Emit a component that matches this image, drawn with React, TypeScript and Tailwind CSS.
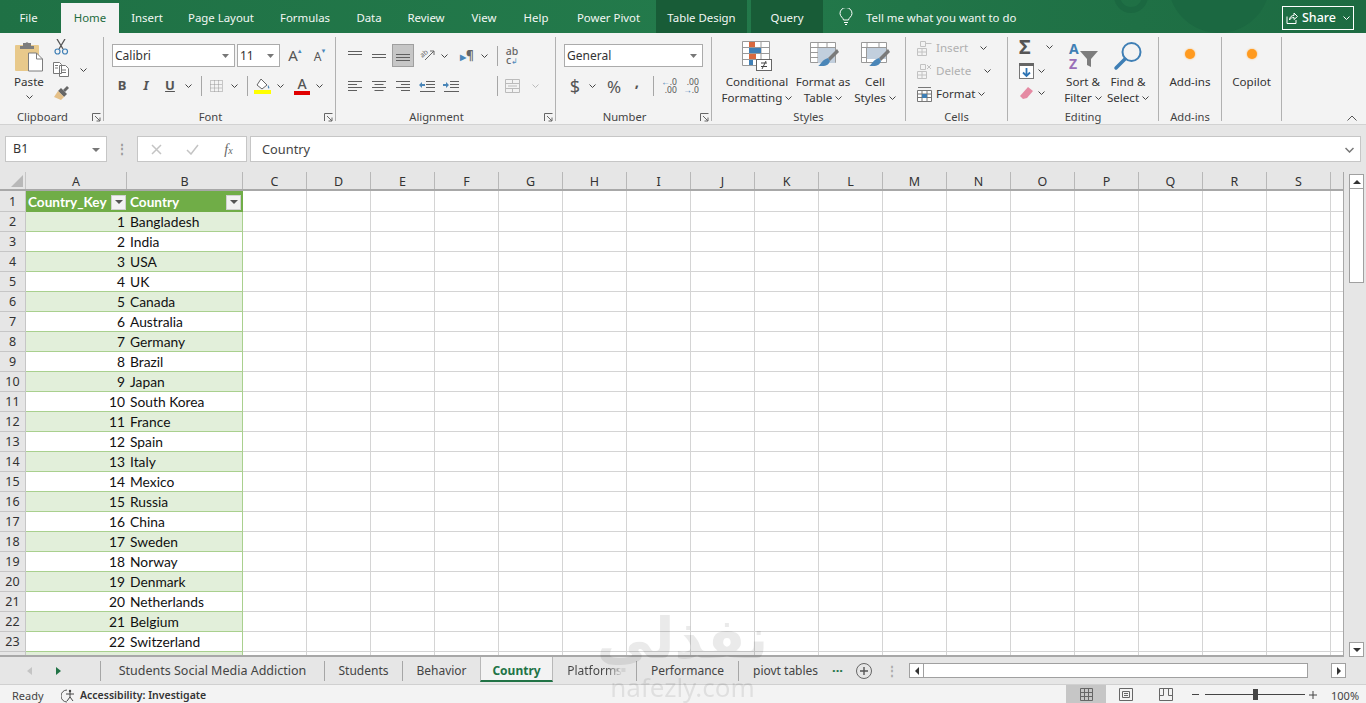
import React from 'react';

const ui = { fontFamily: '"Noto Sans", "Open Sans", sans-serif' };
const cell = { fontFamily: 'Lato, "Noto Sans", sans-serif' };

const Chev = ({ c = '#444' }: { c?: string }) => (
  <svg width="7" height="4" viewBox="0 0 7 4" className="shrink-0"><path d="M.5.5l3 3 3-3" fill="none" stroke={c} strokeWidth="1" /></svg>
);
const Slot = ({ w, ml, children }: { w: string; ml?: string; children?: React.ReactNode }) => (
  <div className={`flex items-center justify-center h-full shrink-0 ${w} ${ml ?? ''}`}>{children}</div>
);
const Launcher = () => (
  <svg width="9" height="9" viewBox="0 0 9 9" className="absolute right-[2px] top-[4px]">
    <path d="M.5 8V.5H8.500M3 3l5 5M8 4.500V8H4.500" fill="none" stroke="#666" strokeWidth="1" />
  </svg>
);
const Group = ({ w, title, launcher, border = true, children }: { w: string; title?: string; launcher?: boolean; border?: boolean; children?: React.ReactNode }) => (
  <div className={`h-[84px] flex flex-col shrink-0 ${w} ${border ? 'border-r border-[#b1b1b1]' : ''}`}>
    <div className="h-[72px] w-full shrink-0">{children}</div>
    {title && (
      <div className={`relative h-[16px] shrink-0 flex items-center justify-center text-[11.2px] text-[#444] ${launcher ? 'pr-[18px]' : ''}`}>
        {title}
        {launcher && <Launcher />}
      </div>
    )}
  </div>
);
const Combo = ({ w, ml, text }: { w: string; ml: string; text: string }) => (
  <div className={`h-[23px] bg-white border border-[#ababab] flex items-center justify-between pl-[2px] pr-[5px] text-[12px] text-[#333] shrink-0 ${w} ${ml}`}>
    <span>{text}</span>
    <svg width="7" height="4" viewBox="0 0 7 4"><path d="M0 0h7L3.500 4z" fill="#777" /></svg>
  </div>
);
const Lines = ({ kind }: { kind: 'top' | 'mid' | 'bot' | 'left' | 'center' | 'right' | 'dec' | 'inc' }) => {
  const s = '#5f5f5f';
  if (kind === 'top' || kind === 'mid' || kind === 'bot') {
    const y = kind === 'top' ? 2 : kind === 'mid' ? 5 : 8;
    return <svg width="16" height="14" viewBox="0 0 16 14"><path d={`M1 ${y}.5h14M1 ${y + 3}.5h14${kind === 'bot' ? 'M1 ' + (y - 3) + '.5h14' : ''}`} stroke={s} fill="none" /></svg>;
  }
  if (kind === 'dec' || kind === 'inc') {
    return (
      <svg width="16" height="13" viewBox="0 0 16 13">
        <path d="M7 1.500h9M7 4.500h9M7 7.500h9M1 11.500h15" stroke={s} fill="none" />
        <path d={kind === 'dec' ? 'M0 5l3-3v2h3v2H3v2z' : 'M6 5L3 2v2H0v2h3v2z'} fill="#4a86b8" />
      </svg>
    );
  }
  const p =
    kind === 'left'
      ? 'M1 1.500h14M1 4.500h9M1 7.500h14M1 10.500h9'
      : kind === 'center'
      ? 'M1 1.500h14M3.500 4.500h9M1 7.500h14M3.500 10.500h9'
      : 'M1 1.500h14M6 4.500h9M1 7.500h14M6 10.500h9';
  return <svg width="16" height="12" viewBox="0 0 16 12"><path d={p} stroke={s} fill="none" /></svg>;
};
const MiniGridIcon = ({ kind }: { kind: 'insert' | 'delete' }) => (
  <svg width="15" height="16" viewBox="0 0 15 16">
    <path d="M.5 8.500h9v7h-9zM.5 12h9M5 8.500v7M3.500 1.500h5v5h-5z" fill="none" stroke="#c2c2c2" />
    {kind === 'insert' ? <path d="M8.500 3.500h6" stroke="#c2c2c2" /> : <path d="M10 2l4 4M14 2l-4 4" stroke="#c2c2c2" />}
  </svg>
);
const Brush = ({ x, y }: { x: number; y: number }) => (
  <g transform={`translate(${x} ${y})`}>
    <path d="M10 9L19 0l2 3-9 9z" fill="#7a7a7a" />
    <path d="M10 9l2 3c-1 3-3 5-8 5H0c3-1 3-6 10-8z" fill="#4a86b8" />
  </g>
);

const rowsData: [number, string][] = [
  [1, 'Bangladesh'], [2, 'India'], [3, 'USA'], [4, 'UK'], [5, 'Canada'], [6, 'Australia'], [7, 'Germany'], [8, 'Brazil'],
  [9, 'Japan'], [10, 'South Korea'], [11, 'France'], [12, 'Spain'], [13, 'Italy'], [14, 'Mexico'], [15, 'Russia'], [16, 'China'],
  [17, 'Sweden'], [18, 'Norway'], [19, 'Denmark'], [20, 'Netherlands'], [21, 'Belgium'], [22, 'Switzerland'],
];
const cols = ['C', 'D', 'E', 'F', 'G', 'H', 'I', 'J', 'K', 'L', 'M', 'N', 'O', 'P', 'Q', 'R', 'S'];

const Blank = () => (
  <>
    {cols.map((c) => (
      <div key={c} className="w-[64px] h-full shrink-0 border-r border-b border-[#d4d4d4]" />
    ))}
    <div className="w-[14px] h-full shrink-0 border-b border-[#d4d4d4]" />
  </>
);
const RowHead = ({ n }: { n: number | string }) => (
  <div className="w-[26px] h-full shrink-0 bg-[#e6e6e6] border-r border-b border-[#c6c6c6] flex items-center justify-center pt-[2px] text-[12.5px] text-[#333]" style={ui}>{n}</div>
);
const FilterBtn = () => (
  <div className="w-[15px] h-[15px] bg-[#f2f2f2] border border-[#d0d0d0] flex items-center justify-center shrink-0">
    <svg width="8" height="4" viewBox="0 0 8 4"><path d="M0 0h8L4 4z" fill="#555" /></svg>
  </div>
);
const TabName = ({ children, ml, w, size = 'text-[12px]' }: { children: React.ReactNode; ml?: string; w: string; size?: string }) => (
  <div className={`h-full flex items-center justify-center shrink-0 text-[#444] ${size} ${w} ${ml ?? ''}`}>{children}</div>
);
const Sep = ({ ml }: { ml?: string }) => <div className={`w-px h-[20px] bg-[#a6a6a6] shrink-0 ${ml ?? ''}`} />;

const TopTab = ({ w, t, dark, extra }: { w: string; t: string; dark?: boolean; extra?: string }) => (
  <div className={`h-full flex items-center justify-center pt-[2px] text-[11.4px] text-[#f2f7f4] shrink-0 ${w} ${dark ? 'bg-[#185c37]' : ''} ${extra ?? ''}`}>{t}</div>
);

export default function App() {
  return (
    <div className="relative w-[1366px] h-[703px] overflow-hidden flex flex-col bg-[#e6e6e6]" style={ui}>
      {/* Title tabs */}
      <div className="relative h-[33px] shrink-0 flex items-end bg-gradient-to-r from-[#1f7145] via-[#237a4b] to-[#1d6b42] overflow-hidden">
        <svg className="absolute left-[1100px] top-0" width="200" height="33" viewBox="0 0 200 33">
          <circle cx="31" cy="-4" r="14" fill="none" stroke="#1b6841" strokeWidth="6" />
          <circle cx="119" cy="-18" r="51" fill="#1b6841" />
        </svg>
        <div className="relative h-full flex items-center">
          <TopTab w="w-[61px]" t="File" extra="pr-[4px]" />
          <div className="w-[58px] h-[30px] mt-[3px] bg-[#f3f3f3] text-[#1e6c41] text-[11.4px] flex items-center justify-center">Home</div>
          <TopTab w="w-[56px]" t="Insert" />
          <TopTab w="w-[92px]" t="Page Layout" />
          <TopTab w="w-[76px]" t="Formulas" />
          <TopTab w="w-[52px]" t="Data" />
          <TopTab w="w-[62px]" t="Review" />
          <TopTab w="w-[54px]" t="View" />
          <TopTab w="w-[50px]" t="Help" />
          <TopTab w="w-[95px]" t="Power Pivot" />
          <TopTab w="w-[91px]" t="Table Design" dark />
          <div className="w-[4px]" />
          <TopTab w="w-[72px]" t="Query" dark />
          <div className="w-[15px] ml-[15px] flex justify-center">
            <svg width="14" height="17" viewBox="0 0 14 17"><path d="M4.500 12c0-2-3.500-3.500-3.500-6.500a6 6 0 0112 0C13 8.500 9.500 10 9.500 12zM5 14.500h4M6 16.500h2" fill="none" stroke="#fff" /></svg>
          </div>
          <div className="ml-[13px] pt-[2px] text-[11.4px] text-[#f2f7f4] whitespace-nowrap">Tell me what you want to do</div>
        </div>
        <div className="absolute right-[12px] top-[6px] w-[72px] h-[24px] border border-white flex items-center justify-center gap-[4px] text-white text-[12.5px] font-medium">
          <svg width="12" height="12" viewBox="0 0 12 12"><path d="M1 4.500v7h9V8M3.500 8c0-3 2-4.500 4.500-4.500V1l3.500 3.500L8 7.500V5.500c-2 0-3.500.500-4.500 2.500z" fill="none" stroke="#fff" /></svg>
          <span>Share</span>
          <span className="ml-[3px]"><Chev c="#fff" /></span>
        </div>
      </div>

      {/* Ribbon */}
      <div className="relative h-[92px] shrink-0 bg-[#f3f3f3] border-b border-[#d2d2d2] pt-[4px] flex items-start">
        <Group w="w-[104px]" title="Clipboard" launcher>
          <div className="flex h-full">
            <div className="w-[46px] ml-[6px] flex flex-col items-center shrink-0">
              <svg className="mt-[4px]" width="30" height="31" viewBox="0 0 30 31">
                <rect x="1" y="4" width="24" height="26" rx="1" fill="#e8c98b" />
                <path d="M9 5V2h2.500a2 2 0 013 0H17v3h3v3H6V5z" fill="#7d7d7d" />
                <path d="M14.500 12h8l6 6v12h-14z" fill="#fff" stroke="#7d7d7d" />
                <path d="M22.500 12v6h6" fill="none" stroke="#7d7d7d" />
              </svg>
              <div className="mt-[2px] text-[11.6px] text-[#333] leading-[16px]">Paste</div>
              <div className="mt-[5px]"><Chev /></div>
            </div>
            <div className="w-[18px] flex flex-col items-center shrink-0 pt-[2px]">
              <svg width="15" height="16" viewBox="0 0 15 16">
                <path d="M3 0l6 10M11 0L5 10" stroke="#555" fill="none" strokeWidth="1.300" />
                <circle cx="3.500" cy="12.500" r="2.500" fill="none" stroke="#3f7fb5" strokeWidth="1.200" />
                <circle cx="11" cy="12.500" r="2.500" fill="none" stroke="#3f7fb5" strokeWidth="1.200" />
              </svg>
              <svg className="mt-[7px]" width="16" height="15" viewBox="0 0 16 15">
                <path d="M.5.500h6l2 2v9h-8zM6.500 3.500h6l3 3v8h-9zM2 3.500h3M2 6h3M8 8h5M8 10.500h5" fill="#fff" stroke="#777" />
              </svg>
              <svg className="mt-[8px]" width="17" height="16" viewBox="0 0 17 16">
                <path d="M10 5l4-4 2 2-4 4z" fill="#666" />
                <path d="M8 3l6 6-3 3-6-6z" fill="#666" />
                <path d="M5 6l6 6-3 3-7-3z" fill="#e5c088" />
              </svg>
            </div>
            <div className="w-[14px] ml-[6px] pt-[31px] flex justify-center"><Chev /></div>
          </div>
        </Group>

        <Group w="w-[232px]" title="Font" launcher>
          <div className="flex items-center mt-[7px]">
            <Combo w="w-[123px]" ml="ml-[8px]" text="Calibri" />
            <Combo w="w-[43px]" ml="ml-[2px]" text="11" />
            <Slot w="w-[24px]" ml="ml-[1px]">
              <div className="relative text-[15px] text-[#555] leading-none">A<span className="absolute -right-[5px] top-[0px] text-[6px] text-[#4a86b8]">▲</span></div>
            </Slot>
            <Slot w="w-[25px]">
              <div className="relative text-[12px] text-[#555] leading-none mt-[3px]">A<span className="absolute -right-[5px] -top-[3px] text-[6px] text-[#4a86b8]">▼</span></div>
            </Slot>
          </div>
          <div className="flex items-center h-[24px] mt-[7px] ml-[8px]">
            <Slot w="w-[20px]"><span className="font-bold text-[13px] text-[#555]">B</span></Slot>
            <Slot w="w-[28px]"><span className="italic font-bold text-[13px] text-[#555]">I</span></Slot>
            <Slot w="w-[20px]"><span className="underline font-bold text-[13px] text-[#555]">U</span></Slot>
            <Slot w="w-[16px]"><Chev /></Slot>
            <Sep ml="ml-[5px]" />
            <Slot w="w-[28px]">
              <svg width="13" height="12" viewBox="0 0 13 12"><path d="M.5.500h12v11H.5zM.5 4.500h12M.5 8h12M4.500.5v11M8.500.5v11" fill="none" stroke="#999" strokeDasharray="1 1" /></svg>
            </Slot>
            <Slot w="w-[8px]"><Chev /></Slot>
            <Sep ml="ml-[9px]" />
            <Slot w="w-[28px]">
              <svg width="17" height="16" viewBox="0 0 17 16">
                <path d="M7 1l6 6-5 4-5-4z" fill="#fff" stroke="#666" />
                <path d="M14 7c1 1.500 2 3 1 3.500s-1.500-2-1-3.500z" fill="#4a86b8" />
                <rect x="0" y="12" width="17" height="4" fill="#ffff00" />
              </svg>
            </Slot>
            <Slot w="w-[8px]"><Chev /></Slot>
            <Slot w="w-[24px]" ml="ml-[6px]">
              <div className="flex flex-col items-center">
                <span className="text-[14px] leading-[12px] text-[#555] font-medium">A</span>
                <div className="w-[16px] h-[4px] bg-[#e00000] mt-[1px]" />
              </div>
            </Slot>
            <Slot w="w-[10px]"><Chev /></Slot>
          </div>
        </Group>

        <Group w="w-[220px]" title="Alignment" launcher>
          <div className="flex items-center h-[23px] mt-[7px] ml-[7px]">
            <Slot w="w-[24px]"><Lines kind="top" /></Slot>
            <Slot w="w-[24px]"><Lines kind="mid" /></Slot>
            <Slot w="w-[22px]" ml="ml-[1px]">
              <div className="w-[22px] h-[23px] bg-[#c6c6c6] border border-[#9f9f9f] flex items-center justify-center"><Lines kind="bot" /></div>
            </Slot>
            <Slot w="w-[22px]" ml="ml-[3px]">
              <svg width="16" height="15" viewBox="0 0 16 15" className="overflow-visible"><path d="M5 12l9-9M14 3v4M14 3h-4" fill="none" stroke="#666" /><text x="0" y="8" fontSize="7" fill="#666" transform="rotate(-40 4 6)">ab</text></svg>
            </Slot>
            <Slot w="w-[10px]"><Chev /></Slot>
            <Slot w="w-[24px]" ml="ml-[6px]">
              <span className="text-[12px] font-bold text-[#666] leading-none"><span className="text-[#4a86b8] text-[8px]">▶</span>¶</span>
            </Slot>
            <Slot w="w-[10px]"><Chev /></Slot>
            <Sep ml="ml-[8px]" />
            <Slot w="w-[28px]">
              <div className="flex flex-col items-center text-[10.5px] text-[#666] leading-[9px] font-medium"><span>ab</span><span>c<span className="text-[#4a86b8] text-[8px]">↲</span></span></div>
            </Slot>
          </div>
          <div className="flex items-center h-[24px] mt-[7px] ml-[7px]">
            <Slot w="w-[24px]"><Lines kind="left" /></Slot>
            <Slot w="w-[24px]"><Lines kind="center" /></Slot>
            <Slot w="w-[24px]"><Lines kind="right" /></Slot>
            <Slot w="w-[24px]"><Lines kind="dec" /></Slot>
            <Slot w="w-[24px]"><Lines kind="inc" /></Slot>
            <Sep ml="ml-[34px]" />
            <Slot w="w-[28px]">
              <svg width="15" height="14" viewBox="0 0 15 14"><path d="M.5.500h14v13H.5zM.5 4.500h14M.5 9.500h14M7.500.5v4M7.500 9.500v4M3 7h9" fill="none" stroke="#bbb" /></svg>
            </Slot>
            <Slot w="w-[10px]" ml="ml-[4px]"><Chev c="#bbb" /></Slot>
          </div>
        </Group>

        <Group w="w-[156px]" title="Number" launcher>
          <div className="flex mt-[7px]"><Combo w="w-[139px]" ml="ml-[8px]" text="General" /></div>
          <div className="flex items-center h-[24px] mt-[7px] ml-[8px] text-[#555]">
            <Slot w="w-[22px]"><span className="text-[18px] leading-none">$</span></Slot>
            <Slot w="w-[12px]"><Chev /></Slot>
            <Slot w="w-[24px]" ml="ml-[4px]"><span className="text-[17px] leading-none">%</span></Slot>
            <Slot w="w-[20px]" ml="ml-[1px]"><span className="text-[15px] font-bold leading-none mb-[10px]">,</span></Slot>
            <Sep ml="ml-[6px]" />
            <Slot w="w-[24px]" ml="ml-[3px]">
              <div className="text-[8.5px] leading-[8px] text-[#555] text-right"><div><span className="text-[#4a86b8]">←</span>.0</div><div>.00</div></div>
            </Slot>
            <Slot w="w-[20px]">
              <div className="text-[8.5px] leading-[8px] text-[#555] text-right"><div>.00</div><div><span className="text-[#4a86b8]">→</span>.0</div></div>
            </Slot>
          </div>
        </Group>

        <Group w="w-[194px]" title="Styles">
          <div className="flex ml-[8px] text-[11.6px] text-[#333] leading-[16px]">
            <div className="w-[74px] flex flex-col items-center shrink-0">
              <svg className="mt-[4px]" width="30" height="30" viewBox="0 0 30 30">
                <path d="M.5.500h27v24H.5zM.5 6.500h27M.5 12.500h27M.5 18.500h27M9 .5v24M19 .5v24" fill="#fff" stroke="#999" />
                <rect x="7" y="1" width="6" height="5" fill="#d9693f" />
                <rect x="7" y="7" width="12" height="5" fill="#3f7fb5" />
                <rect x="7" y="13" width="7" height="5" fill="#d9693f" />
                <rect x="7" y="19" width="4" height="5" fill="#3f7fb5" />
                <rect x="14.500" y="18.500" width="15" height="11" fill="#fff" stroke="#666" />
                <path d="M19 22h6M19 25.500h6M24 20l-4 8" stroke="#444" fill="none" />
              </svg>
              <div className="mt-[3px] whitespace-nowrap">Conditional</div>
              <div className="flex items-center gap-[3px] whitespace-nowrap">Formatting <Chev /></div>
            </div>
            <div className="w-[58px] flex flex-col items-center shrink-0">
              <svg className="mt-[4px] ml-[3px]" width="30" height="30" viewBox="0 0 30 30">
                <path d="M.5 1.500h25v20H.5zM.5 6.500h25M.5 11.500h25M.5 16.500h25M8 1.500v20M17 1.500v20" fill="#fff" stroke="#999" />
                <rect x="8" y="7" width="17" height="15" fill="#c2cfdd" />
                <Brush x={8} y={8} />
              </svg>
              <div className="mt-[3px] whitespace-nowrap">Format as</div>
              <div className="flex items-center gap-[3px] whitespace-nowrap">Table <Chev /></div>
            </div>
            <div className="w-[46px] flex flex-col items-center shrink-0">
              <svg className="mt-[4px] ml-[2px]" width="30" height="30" viewBox="0 0 30 30">
                <path d="M.5 1.500h25v20H.5zM.5 6.500h25M6 1.500v5M18 1.500v5M.5 16.500h5M5.500 6.500v15" fill="#fff" stroke="#999" />
                <rect x="6" y="7" width="19" height="11" fill="#c2cfdd" />
                <Brush x={8} y={8} />
              </svg>
              <div className="mt-[3px] whitespace-nowrap">Cell</div>
              <div className="flex items-center gap-[3px] whitespace-nowrap">Styles <Chev /></div>
            </div>
          </div>
        </Group>

        <Group w="w-[102px]" title="Cells">
          <div className="flex flex-col text-[11.6px] leading-[23px] ml-[11px] -mt-[1px]">
            <div className="h-[23px] flex items-center text-[#b0b0b0]"><MiniGridIcon kind="insert" /><span className="ml-[4px] w-[44px]">Insert</span><Chev /></div>
            <div className="h-[23px] flex items-center text-[#b0b0b0]"><MiniGridIcon kind="delete" /><span className="ml-[4px] w-[48px]">Delete</span><Chev /></div>
            <div className="h-[23px] flex items-center text-[#333]">
              <svg width="15" height="16" viewBox="0 0 15 16"><path d="M.5 4.500h14v11H.5zM.5 8h14M.5 11.500h14M5 4.500v11M10 4.500v11M1 1.500h13" fill="#fff" stroke="#777" /><rect x="5" y="8" width="5" height="4" fill="#3f7fb5" /></svg>
              <span className="ml-[4px] mr-[3px]">Format</span><Chev />
            </div>
          </div>
        </Group>

        <Group w="w-[151px]" title="Editing">
          <div className="flex text-[11.6px] text-[#333] leading-[16px]">
            <div className="w-[52px] shrink-0 flex flex-col pl-[11px]">
              <div className="h-[20px] flex items-center">
                <span className="w-[17px] text-[20px] leading-none text-[#555] font-bold">Σ</span>
                <span className="ml-[10px]"><Chev /></span>
              </div>
              <div className="h-[28px] flex items-center">
                <svg width="15" height="16" viewBox="0 0 15 16"><rect x=".5" y=".5" width="14" height="15" fill="#fff" stroke="#777" /><rect x="0" y="0" width="15" height="3" fill="#666" /><path d="M7.500 5v8M4 9.500l3.500 3.500L11 9.500" stroke="#2f75b5" strokeWidth="1.800" fill="none" /></svg>
                <span className="ml-[4px]"><Chev /></span>
              </div>
              <div className="h-[16px] flex items-center">
                <svg width="14" height="13" viewBox="0 0 14 13"><path d="M9 0l5 4-6 7-4 1-3-3z" fill="#e58aa3" /></svg>
                <span className="ml-[5px]"><Chev /></span>
              </div>
            </div>
            <div className="w-[46px] shrink-0 flex flex-col items-center">
              <svg className="mt-[4px] overflow-visible" width="30" height="30" viewBox="0 0 30 30">
                <text x="1" y="13" fontSize="14" fontWeight="700" fill="#3f7fb5">A</text>
                <text x="1" y="28" fontSize="14" fontWeight="700" fill="#9a6fb8">Z</text>
                <path d="M12 10h18l-7 8v8l-4-2v-6z" fill="#7d7d7d" />
              </svg>
              <div className="mt-[3px] whitespace-nowrap">Sort &amp;</div>
              <div className="flex items-center gap-[3px] whitespace-nowrap">Filter <Chev /></div>
            </div>
            <div className="w-[44px] shrink-0 flex flex-col items-center">
              <svg className="mt-[4px]" width="30" height="30" viewBox="0 0 30 30">
                <circle cx="18.500" cy="11" r="9" fill="none" stroke="#3f7fb5" strokeWidth="2" />
                <path d="M12 18L3 27" stroke="#3f7fb5" strokeWidth="3.500" strokeLinecap="round" />
              </svg>
              <div className="mt-[3px] whitespace-nowrap">Find &amp;</div>
              <div className="flex items-center gap-[3px] whitespace-nowrap">Select <Chev /></div>
            </div>
          </div>
        </Group>

        <Group w="w-[63px]" title="Add-ins">
          <div className="flex flex-col items-center text-[11.6px] text-[#333] leading-[16px]">
            <div className="mt-[12px] w-[10px] h-[10px] rounded-full bg-[#ff9a1f] shadow-[0_0_2px_#ffb050]" />
            <div className="mt-[15px] whitespace-nowrap">Add-ins</div>
          </div>
        </Group>
        <Group w="w-[60px]">
          <div className="flex flex-col items-center text-[11.6px] text-[#333] leading-[16px]">
            <div className="mt-[12px] w-[10px] h-[10px] rounded-full bg-[#ff9a1f] shadow-[0_0_2px_#ffb050]" />
            <div className="mt-[15px] whitespace-nowrap">Copilot</div>
          </div>
        </Group>
        <svg className="absolute right-[9px] bottom-[3px]" width="10" height="6" viewBox="0 0 10 6"><path d="M.5 5.500l4.500-4.500 4.500 4.500" fill="none" stroke="#555" /></svg>
      </div>

      {/* Formula bar */}
      <div className="h-[47px] shrink-0 flex items-start pt-[11px] bg-[#e6e6e6]">
        <div className="ml-[5px] w-[102px] h-[26px] bg-white border border-[#c6c6c6] flex items-center justify-between pl-[7px] pr-[6px] pt-[1px] text-[12.5px] text-[#333]">
          <span>B1</span>
          <svg width="8" height="4" viewBox="0 0 8 4"><path d="M0 0h8L4 4z" fill="#777" /></svg>
        </div>
        <div className="w-[30px] h-[26px] flex items-center justify-center text-[#999] text-[12px] font-bold">⋮</div>
        <div className="w-[110px] h-[26px] bg-white border border-[#c6c6c6] flex items-center shrink-0">
          <Slot w="w-[36px]"><svg width="11" height="11" viewBox="0 0 11 11"><path d="M1 1l9 9M10 1l-9 9" stroke="#c4c4c4" strokeWidth="1.500" /></svg></Slot>
          <Slot w="w-[37px]"><svg width="13" height="11" viewBox="0 0 13 11"><path d="M1 6l4 4 7-9" fill="none" stroke="#c4c4c4" strokeWidth="1.500" /></svg></Slot>
          <Slot w="w-[35px]"><span className="italic text-[14px] text-[#666]" style={{ fontFamily: '"Liberation Serif", serif' }}>f<span className="text-[10px]">x</span></span></Slot>
        </div>
        <div className="ml-[3px] w-[1111px] h-[26px] bg-white border border-[#c6c6c6] flex items-center justify-between pl-[11px] pr-[6px] pt-[1px] text-[12.8px] text-[#444]">
          <span>Country</span>
          <svg width="9" height="6" viewBox="0 0 9 6"><path d="M.5 1l4 4 4-4" fill="none" stroke="#777" strokeWidth="1.500" /></svg>
        </div>
      </div>

      {/* Sheet */}
      <div className="h-[485px] shrink-0 flex overflow-hidden">
        <div className="w-[1344px] h-full shrink-0 overflow-hidden flex flex-col bg-white border-b-2 border-[#a8a8a8] border-r border-r-[#a8a8a8]">
          <div className="h-[19px] shrink-0 flex bg-[#e6e6e6] border-b-2 border-[#a8a8a8] text-[12.5px] text-[#333]">
            <div className="w-[26px] shrink-0 border-r border-[#c6c6c6] flex items-end justify-end p-[2px]">
              <svg width="12" height="12" viewBox="0 0 12 12"><path d="M12 0v12H0z" fill="#b8b8b8" /></svg>
            </div>
            <div className="w-[101px] shrink-0 border-r border-[#b8b8b8] flex items-center justify-center pt-[3px]">A</div>
            <div className="w-[116px] shrink-0 border-r border-[#b8b8b8] flex items-center justify-center pt-[3px]">B</div>
            {cols.map((c) => (
              <div key={c} className="w-[64px] shrink-0 border-r border-[#b8b8b8] flex items-center justify-center pt-[3px]">{c}</div>
            ))}
          </div>
          <div className="h-[21px] shrink-0 flex">
            <RowHead n={1} />
            <div className="w-[101px] h-full shrink-0 bg-[#70ad47] flex items-center justify-between pl-[2px] pr-[1px] pt-[1px] text-white font-bold text-[13.6px]" style={cell}>
              <span>Country_Key</span><FilterBtn />
            </div>
            <div className="w-[116px] h-full shrink-0 bg-[#70ad47] flex items-center justify-between pl-[3px] pr-[2px] pt-[1px] text-white font-bold text-[13.6px]" style={cell}>
              <span>Country</span><FilterBtn />
            </div>
            <Blank />
          </div>
          {rowsData.map(([k, name], i) => (
            <div key={k} className="h-[20px] shrink-0 flex">
              <RowHead n={k + 1} />
              <div className={`w-[101px] h-full shrink-0 border-b border-[#a9d08e] flex items-center justify-end pr-[2px] pt-[1px] text-[13.8px] text-[#111] ${i % 2 === 0 ? 'bg-[#e2efda]' : 'bg-white'}`} style={cell}>{k}</div>
              <div className={`w-[116px] h-full shrink-0 border-b border-r border-[#a9d08e] flex items-center pl-[3px] pt-[1px] text-[13.8px] text-[#111] ${i % 2 === 0 ? 'bg-[#e2efda]' : 'bg-white'}`} style={cell}>{name}</div>
              <Blank />
            </div>
          ))}
          <div className="h-[20px] shrink-0 flex">
            <RowHead n="" />
            <div className="w-[217px] h-full shrink-0 bg-[#e2efda] border-r border-[#a9d08e]" />
            <Blank />
          </div>
        </div>
        <div className="w-[22px] h-full shrink-0 bg-[#e6e6e6] flex flex-col items-center pl-[3px] pt-[2px]">
          <div className="w-[15px] h-[15px] bg-white border border-[#a0a0a0] flex items-center justify-center shrink-0">
            <svg width="8" height="4" viewBox="0 0 8 4"><path d="M0 4h8L4 0z" fill="#333" /></svg>
          </div>
          <div className="w-[15px] h-[94px] bg-white border border-t-0 border-[#a0a0a0] shrink-0" />
          <div className="flex-1" />
          <div className="w-[15px] h-[15px] bg-white border border-[#a0a0a0] flex items-center justify-center shrink-0">
            <svg width="8" height="4" viewBox="0 0 8 4"><path d="M0 0h8L4 4z" fill="#333" /></svg>
          </div>
        </div>
      </div>

      {/* Sheet tabs */}
      <div className="h-[28px] shrink-0 flex items-center bg-[#e6e6e6] border-b border-[#d0d0d0]">
        <div className="w-[100px] h-full flex items-center shrink-0">
          <svg className="ml-[27px]" width="5" height="8" viewBox="0 0 5 8"><path d="M5 0v8L0 4z" fill="#c4c4c4" /></svg>
          <svg className="ml-[24px]" width="5" height="8" viewBox="0 0 5 8"><path d="M0 0v8l5-4z" fill="#217346" /></svg>
        </div>
        <Sep />
        <TabName w="w-[223px]" size="text-[12.5px] pt-[2px]">Students Social Media Addiction</TabName>
        <Sep />
        <TabName w="w-[77px]">Students</TabName>
        <Sep />
        <TabName w="w-[77px]">Behavior</TabName>
        <div className="w-[73px] h-[25px] self-start bg-[#f3f3f3] border-l border-r border-[#b8b8b8] border-b-2 border-b-[#217346] text-[#217346] font-bold text-[12px] flex items-center justify-center pt-[4px] shrink-0">Country</div>
        <TabName w="w-[83px]">
          <span className="bg-gradient-to-r from-[#444] from-70% to-[#ddd] bg-clip-text text-transparent">Platforms</span>
        </TabName>
        <Sep />
        <TabName w="w-[101px]">Performance</TabName>
        <Sep />
        <TabName w="w-[79px]" ml="ml-[14px] !justify-start">piovt tables</TabName>
        <div className="w-[22px] shrink-0 text-[#217346] text-[13px] font-bold leading-none mb-[6px]">...</div>
        <div className="w-[16px] h-[16px] rounded-full border border-[#666] flex items-center justify-center shrink-0 ml-[2px]">
          <svg width="10" height="10" viewBox="0 0 10 10"><path d="M5 1v8M1 5h8" stroke="#555" strokeWidth="1.400" /></svg>
        </div>
        <div className="w-[13px] ml-[14px] text-[#aaa] text-[12px] font-bold shrink-0">⋮</div>
        <div className="w-[15px] h-[15px] bg-white border border-[#a0a0a0] flex items-center justify-center shrink-0 ml-[10px]">
          <svg width="4" height="8" viewBox="0 0 4 8"><path d="M4 0v8L0 4z" fill="#333" /></svg>
        </div>
        <div className="w-[384px] h-[15px] bg-white border border-l-0 border-[#a0a0a0] shrink-0" />
        <div className="w-[23px] shrink-0" />
        <div className="w-[15px] h-[15px] bg-white border border-[#a0a0a0] flex items-center justify-center shrink-0">
          <svg width="4" height="8" viewBox="0 0 4 8"><path d="M0 0v8l4-4z" fill="#333" /></svg>
        </div>
      </div>

      {/* Status */}
      <div className="flex-1 flex items-center bg-[#f3f3f3] text-[11px] text-[#444]">
        <span className="ml-[12px] w-[49px] shrink-0 pt-[3px]">Ready</span>
        <svg className="mt-[2px]" width="16" height="14" viewBox="0 0 16 14"><path d="M6 1a6 6 0 100 12" fill="none" stroke="#555" /><circle cx="9" cy="2" r="1.200" fill="#444" /><path d="M5 5h8M9 3v5l-3 4M9 8l3 4" fill="none" stroke="#444" /></svg>
        <span className="ml-[3px] pt-[3px] font-semibold whitespace-nowrap text-[10.5px] text-[#333]">Accessibility: Investigate</span>
        <div className="flex-1" />
        <div className="w-[40px] h-full bg-[#c6c6c6] flex items-center justify-center shrink-0">
          <svg width="13" height="13" viewBox="0 0 13 13"><path d="M.5.500h12v12H.5zM.5 4.500h12M.5 8.500h12M4.500.5v12M8.500.5v12" fill="none" stroke="#666" /></svg>
        </div>
        <Slot w="w-[40px]"><svg width="14" height="13" viewBox="0 0 14 13"><path d="M.5.500h13v12H.5zM3.500 3.500h7v6h-7zM5 5.500h4M5 7.500h4" fill="none" stroke="#666" /></svg></Slot>
        <Slot w="w-[40px]"><svg width="14" height="13" viewBox="0 0 14 13"><path d="M.5.500h13v12H.5zM.5 7.500h4V.5M9.500.5v7h4" fill="none" stroke="#666" /></svg></Slot>
        <div className="w-[7px] h-px bg-[#444] ml-[6px] shrink-0" />
        <div className="ml-[6px] w-[100px] h-px bg-[#444] flex items-center justify-center shrink-0">
          <div className="w-[5px] h-[11px] bg-[#444]" />
        </div>
        <svg className="ml-[4px] shrink-0" width="8" height="8" viewBox="0 0 8 8"><path d="M4 0v8M0 4h8" stroke="#444" /></svg>
        <span className="ml-[14px] mr-[8px] w-[27px] pt-[2px] shrink-0 whitespace-nowrap text-[11px] text-[#444]">100%</span>
      </div>

      {/* Watermark */}
      <div className="absolute left-[590px] top-[606px] w-[185px] h-[97px] flex flex-col items-center pointer-events-none opacity-[0.08] text-black">
        <div className="text-[56px] leading-[66px] font-bold whitespace-nowrap" style={{ fontFamily: '"DejaVu Sans", sans-serif' }} dir="rtl">نفذلي</div>
        <div className="text-[26px] leading-[26px] mt-[2px] whitespace-nowrap">nafezly.com</div>
      </div>
    </div>
  );
}
